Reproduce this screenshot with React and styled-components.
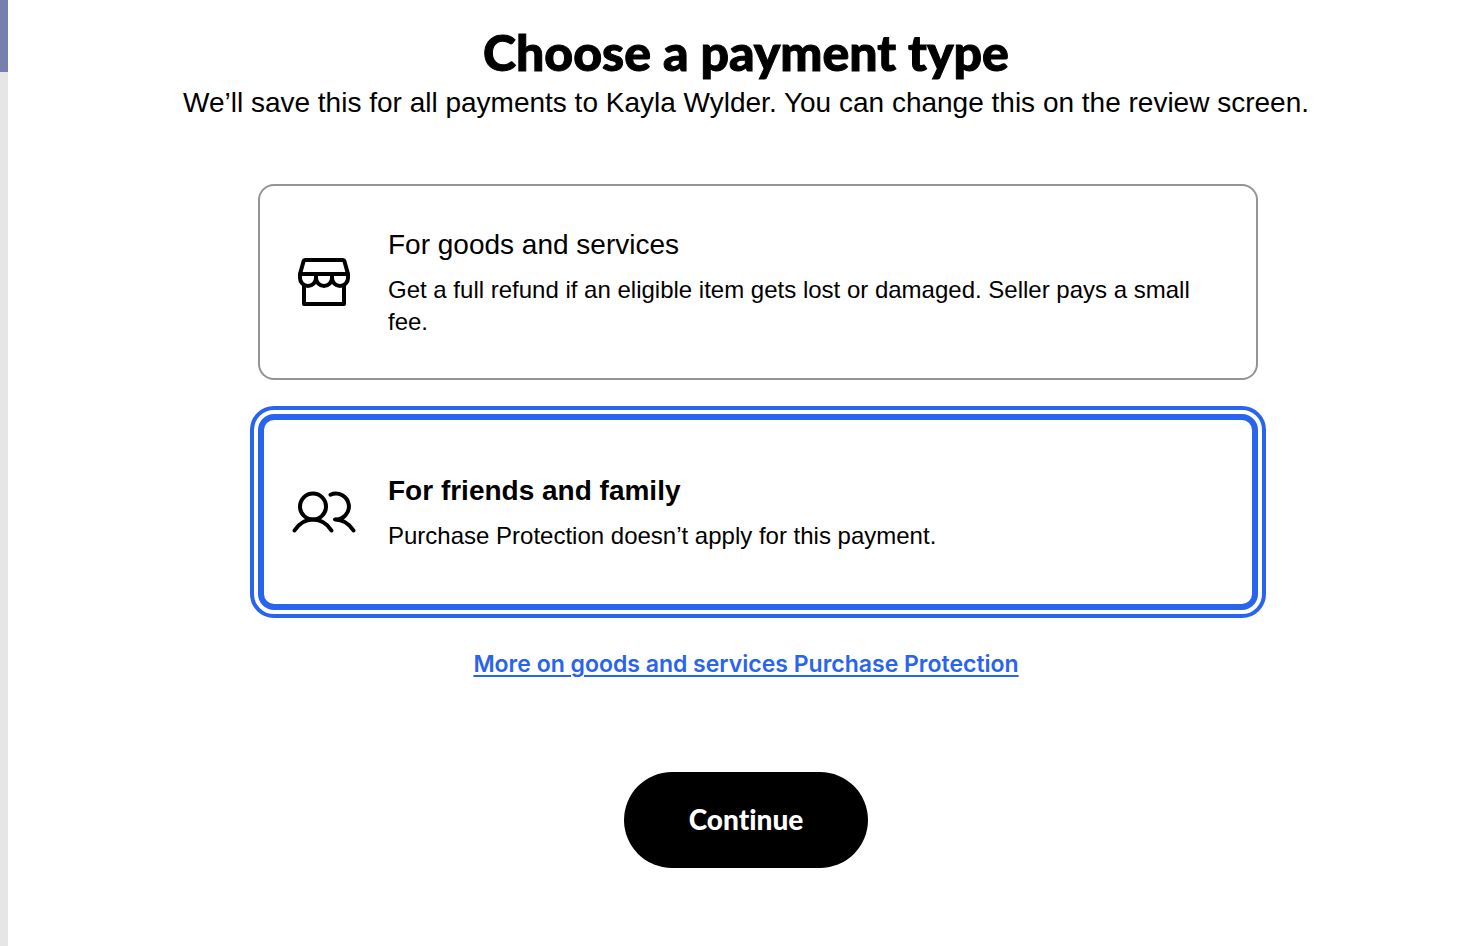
import React, { useState } from "react";
import styled, { createGlobalStyle } from "styled-components";

const GlobalStyle = createGlobalStyle`
  * {
    box-sizing: border-box;
  }

  body {
    margin: 0;
    background-color: white;
    color: black;
    font-family: "Liberation Sans", Arial, sans-serif;
  }
`;

const Container = styled.div`
  display: flex;
  min-height: 100vh;
`;

const Backdrop = styled.div`
  flex: none;
  width: 8px;
  background-color: #e6e6e6;
`;

const BackdropHeader = styled.div`
  height: 72px;
  background-color: #7780ad;
`;

const Main = styled.main`
  flex: 1;
  display: flex;
  flex-direction: column;
  align-items: center;
  padding: 22px 0px 78px 2px;
`;

const Title = styled.h1`
  margin: 0px;
  font-family: Lato, sans-serif;
  font-size: 50px;
  font-weight: 900;
  line-height: 60px;
  text-align: center;
  -webkit-text-stroke: 1px black;
`;

const Subtitle = styled.p`
  margin: 0px;
  font-size: 28px;
  line-height: 42px;
  text-align: center;
`;

const Options = styled.div`
  display: flex;
  flex-direction: column;
  gap: 34px;
  width: 100%;
  max-width: 1024px;
  margin-top: 60px;
  padding-left: 24px;
`;

const Option = styled.label`
  display: flex;
  align-items: center;
  min-height: 196px;
  padding: 40px 40px 40px 30px;
  border-radius: 16px;
  box-shadow: inset 0 0 0 2px #929496;
  cursor: pointer;

  &:has(input:checked) {
    box-shadow: inset 0 0 0 6px #2864ee;
    outline: 4px solid #2864ee;
    outline-offset: 4px;
  }
`;

const Radio = styled.input`
  appearance: none;
  width: 0px;
  height: 0px;
  margin: 0px;
  outline: none;
`;

const Icon = styled.svg`
  flex: none;
  width: 72px;
  height: 56px;
  margin-right: 28px;
  fill: none;
  stroke: currentColor;
  stroke-width: 4;
  stroke-linecap: round;
  stroke-linejoin: round;
`;

const OptionText = styled.span`
  display: flex;
  flex-direction: column;
  gap: 10px;
`;

const OptionTitle = styled.span`
  font-size: 28px;
  font-weight: ${(props) => (props.$selected ? "bold" : "normal")};
  line-height: 38px;
`;

const OptionDetail = styled.span`
  font-size: 24px;
  line-height: 32px;
`;

const MoreLink = styled.a`
  margin-top: 38px;
  color: #2864ee;
  font-family: Inter, sans-serif;
  font-size: 23px;
  font-weight: 600;
  line-height: 32px;
  text-decoration-thickness: 2px;
  text-underline-offset: 3px;
`;

const Button = styled.button`
  min-width: 244px;
  min-height: 96px;
  margin-top: 92px;
  padding: 0px 64px 2px;
  border: none;
  border-radius: 48px;
  background-color: black;
  color: white;
  font-family: Lato, sans-serif;
  font-size: 28px;
  font-weight: 900;
  font-variant-ligatures: none;
  cursor: pointer;
`;

const StoreIcon = () => (
  <Icon viewBox="0 0 72 56" aria-hidden="true">
    <path d="M12 20 L15.5 7.5 Q16 6 17.5 6 H54.5 Q56 6 56.5 7.5 L60 20 Z" />
    <path d="M12 20 V24 A8 8 0 0 0 28 24 V20 M28 24 A8 8 0 0 0 44 24 V20 M44 24 A8 8 0 0 0 60 24 V20" />
    <path d="M16 32 V50 H56 V32" />
  </Icon>
);

const PeopleIcon = () => (
  <Icon viewBox="0 0 72 56" aria-hidden="true">
    <circle cx="25" cy="22.5" r="13" />
    <path d="M6.5 46.5 C11 39.5 17.5 35.5 25 35.5 C32.5 35.5 39 39.5 43.5 46.5" />
    <path d="M42.5 10.7 A13 13 0 1 1 47 35.5 C54.5 35.5 61 39.5 65.5 46.5" />
  </Icon>
);

const options = [
  {
    id: "goods",
    title: "For goods and services",
    detail: "Get a full refund if an eligible item gets lost or damaged. Seller pays a small fee.",
    icon: <StoreIcon />,
  },
  {
    id: "friends",
    title: "For friends and family",
    detail: "Purchase Protection doesn’t apply for this payment.",
    icon: <PeopleIcon />,
  },
];

const App = () => {
  const [selected, setSelected] = useState("friends");

  return (
    <Container>
      <GlobalStyle />
      <Backdrop>
        <BackdropHeader />
      </Backdrop>
      <Main>
        <Title>Choose a payment type</Title>
        <Subtitle>
          We’ll save this for all payments to Kayla Wylder. You can change this on the review screen.
        </Subtitle>
        <Options role="radiogroup" aria-label="Payment type">
          {options.map((option) => (
            <Option key={option.id} htmlFor={option.id}>
              <Radio
                type="radio"
                name="paymentType"
                id={option.id}
                checked={selected === option.id}
                onChange={() => setSelected(option.id)}
              />
              {option.icon}
              <OptionText>
                <OptionTitle $selected={selected === option.id}>{option.title}</OptionTitle>
                <OptionDetail>{option.detail}</OptionDetail>
              </OptionText>
            </Option>
          ))}
        </Options>
        <MoreLink href="#purchase-protection">More on goods and services Purchase Protection</MoreLink>
        <Button type="button">Continue</Button>
      </Main>
    </Container>
  );
};

export default App;
